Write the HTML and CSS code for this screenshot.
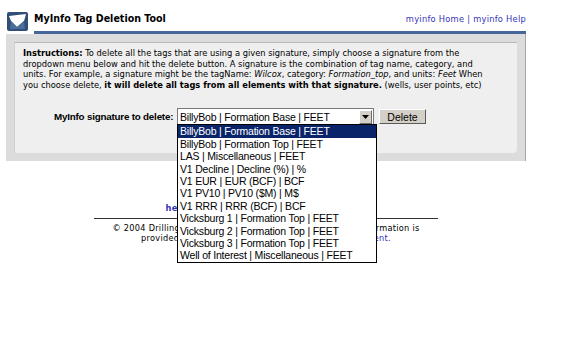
FILE: index.html
```html
<!DOCTYPE html>
<html lang="en">
<head>
    <meta charset="UTF-8">
    <title>MyInfo Tag Deletion Tool</title>
    <link rel="stylesheet" href="styles.css">
</head>
<body>
    <div class="page">
        <div class="header">
            <svg class="logo" width="21" height="19" viewBox="0 0 21 19">
                <rect x="0" y="0" width="21" height="19" rx="2" fill="#2f4f78"/>
                <polygon points="2,4 19,2 17,9 10,15 4,9" fill="#ffffff"/>
                <polygon points="4,9 10,15 17,9 18,17 3,17" fill="#4a6d99"/>
            </svg>
            <div class="head-main">
                <div class="head-row">
                    <span class="title">MyInfo Tag Deletion Tool</span>
                    <span class="toplinks"><a href="#">myinfo Home</a> | <a href="#">myinfo Help</a></span>
                </div>
            </div>
        </div>

        <div class="panel">
            <div class="inner">
                <p class="instructions">
                    <b>Instructions:</b> To delete all the tags that are using a given signature, simply choose a signature from the<br>
                    dropdown menu below and hit the delete button. A signature is the combination of tag name, category, and<br>
                    units. For example, a signature might be the tagName: <i>Wilcox</i>, category: <i>Formation_top</i>, and units: <i>Feet</i> When<br>
                    you choose delete, <b>it will delete all tags from all elements with that signature.</b> (wells, user points, etc)
                </p>
                <div class="form-row">
                    <label class="sig-label">MyInfo signature to delete:</label>
                    <div class="select-wrap">
                        <div class="select-box">
                            <span class="select-text">BillyBob | Formation Base | FEET</span>
                            <span class="select-arrow">
                                <svg width="7" height="4" viewBox="0 0 7 4"><polygon points="0,0 7,0 3.5,4" fill="#000"/></svg>
                            </span>
                        </div>
                        <ul class="dropdown">
                            <li class="selected">BillyBob | Formation Base | FEET</li>
                            <li>BillyBob | Formation Top | FEET</li>
                            <li>LAS | Miscellaneous | FEET</li>
                            <li>V1 Decline | Decline (%) | %</li>
                            <li>V1 EUR | EUR (BCF) | BCF</li>
                            <li>V1 PV10 | PV10 ($M) | M$</li>
                            <li>V1 RRR | RRR (BCF) | BCF</li>
                            <li>Vicksburg 1 | Formation Top | FEET</li>
                            <li>Vicksburg 2 | Formation Top | FEET</li>
                            <li>Vicksburg 3 | Formation Top | FEET</li>
                            <li>Well of Interest | Miscellaneous | FEET</li>
                        </ul>
                    </div>
                    <button class="delete-btn">Delete</button>
                </div>
            </div>
        </div>

        <div class="footer">
            <div class="footlinks"><a href="#">help</a> | <a href="#">contact us</a> | <a href="#">terms of use</a> | <a href="#">privacy</a></div>
            <hr class="rule">
            <p class="copy">
                &copy; 2004 Drilling Info, Inc. All rights reserved. Use of this information is<br>
                provided subject to the terms of your <a href="#">license agreement.</a>
            </p>
        </div>
    </div>
</body>
</html>
```

FILE: styles.css
```css
html, body {
    margin: 0;
    min-height: 344px;
    background: #ffffff;
}
body {
    font-family: "DejaVu Sans", Verdana, sans-serif;
    color: #000;
}
a {
    color: #3333bb;
    text-decoration: none;
}
.page {
    width: 520px;
    margin-left: 6px;
    min-height: 344px;
}
.header {
    display: flex;
    align-items: flex-end;
    padding-top: 12px;
}
.logo {
    margin: 0 6px 3px 1px;
    display: block;
}
.head-main {
    flex: 1;
    border-bottom: 3px solid #44689a;
}
.head-row {
    display: flex;
    justify-content: space-between;
    align-items: baseline;
    height: 19px;
}
.title {
    font-family: "DejaVu Sans Condensed", "DejaVu Sans", sans-serif;
    font-weight: bold;
    font-size: 10.6px;
}
.toplinks {
    font-size: 8.3px;
    letter-spacing: 0.25px;
    color: #3333bb;
}
.panel {
    background: #dcdcdc;
    padding: 8px;
    border-right: 1px solid #a8a8a8;
}
.inner {
    background: #efefef;
    border-top: 1px solid #b8b8b8;
    border-left: 1px solid #cfcfcf;
    border-bottom-right-radius: 4px;
    height: 111px;
    box-sizing: border-box;
    padding: 5px 6px 0 8px;
}
.instructions {
    margin: 0;
    font-size: 8.3px;
    line-height: 10.6px;
    white-space: nowrap;
}
.form-row {
    display: flex;
    align-items: center;
    margin-top: 18px;
}
.sig-label {
    font-family: "Liberation Sans", Arial, sans-serif;
    font-weight: bold;
    font-size: 9.8px;
    width: 123px;
    margin-left: 31px;
    letter-spacing: -0.2px;
}
.select-wrap {
    position: relative;
    width: 197px;
}
.select-box {
    display: flex;
    align-items: center;
    height: 15px;
    background: #fff;
    border: 1px solid #7a7a7a;
}
.select-text {
    flex: 1;
    font-family: "Liberation Sans", Arial, sans-serif;
    font-size: 10.5px;
    padding-left: 2px;
    letter-spacing: -0.2px;
}
.select-arrow {
    width: 11px;
    height: 12px;
    margin-right: 1px;
    background: #d4d0c8;
    border: 1px solid;
    border-color: #fff #6e6e6e #6e6e6e #fff;
    display: flex;
    align-items: center;
    justify-content: center;
}
.dropdown {
    position: absolute;
    top: 16px;
    left: 0;
    width: 198px;
    margin: 0;
    padding: 0;
    list-style: none;
    background: #fff;
    border: 1px solid #000;
    font-family: "Liberation Sans", Arial, sans-serif;
    font-size: 10.5px;
    letter-spacing: -0.2px;
    z-index: 5;
}
.dropdown li {
    height: 12.4px;
    line-height: 12.4px;
    padding-left: 2px;
    white-space: nowrap;
}
.dropdown li.selected {
    background: #0a246a;
    color: #fff;
}
.delete-btn {
    margin-left: 5px;
    width: 47px;
    height: 15px;
    padding: 0;
    font-family: "Liberation Sans", Arial, sans-serif;
    font-size: 10.5px;
    background: #d4d0c8;
    border: 1px solid;
    border-color: #fff #5a5a5a #5a5a5a #fff;
}
.footer {
    text-align: center;
    padding-top: 42px;
}
.footlinks {
    font-size: 8.3px;
    font-weight: bold;
    letter-spacing: 0.3px;
    color: #3333bb;
}
.rule {
    width: 66%;
    margin: 5px auto 4px auto;
    border: none;
    border-top: 1px solid #333;
}
.copy {
    margin: 0;
    font-size: 8.2px;
    letter-spacing: 0.28px;
    line-height: 10px;
}
```
